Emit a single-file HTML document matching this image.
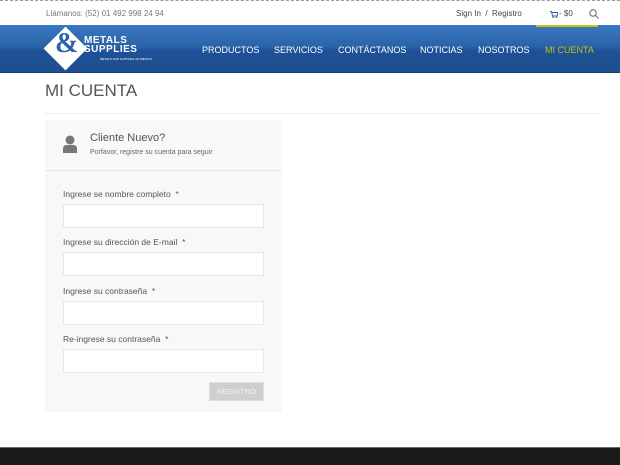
<!DOCTYPE html>
<html><head><meta charset="utf-8"><style>
*{margin:0;padding:0;box-sizing:border-box}
body{width:620px;height:465px;overflow:hidden;background:#fff;font-family:"Liberation Sans",sans-serif;position:relative}
.top{position:absolute;top:0;left:0;width:620px;height:25px;border-top:1px dashed #999;font-size:8px;color:#777}
.nav{position:absolute;top:25px;left:0;width:620px;height:48px;background:linear-gradient(#3a78c2 0%,#2a63a8 45%,#1d5096 55%,#1e4f8f 100%);border-bottom:1px solid #18406f}
.nav a{position:absolute;top:20px;color:#fff;font-size:9px;text-decoration:none}
.field label{display:block;font-size:8.5px;color:#555;margin-bottom:5px}
.field label b{color:#2a63a8;font-weight:normal}
.field div{width:201px;height:24px;background:#fff;border:1px solid #e8e8e8}
.field{position:absolute;left:63px}
</style></head><body>
<div class="top">
<span style="position:absolute;left:46px;top:8px">Llámanos: (52) 01 492 998 24 94</span>
<span style="position:absolute;left:456px;top:8px;color:#444">Sign In &nbsp;/&nbsp; Registro</span>
<svg style="position:absolute;left:550px;top:10px" width="8" height="7"><path d="M0 0.5H1.5L2.5 5H7L8 1.5H2" fill="none" stroke="#2a63a8" stroke-width="1"/><circle cx="3" cy="6.3" r="0.8" fill="#2a63a8"/><circle cx="6.5" cy="6.3" r="0.8" fill="#2a63a8"/></svg>
<span style="position:absolute;left:559px;top:8px;color:#444">- $0</span>
<svg style="position:absolute;left:589px;top:8px" width="10" height="10"><circle cx="4" cy="4" r="3.2" fill="none" stroke="#666" stroke-width="1"/><line x1="6.5" y1="6.5" x2="9.5" y2="9.5" stroke="#666"/></svg>
</div>
<div style="position:absolute;left:536px;top:25px;width:62px;height:2px;background:#c7c10a;z-index:2"></div>
<div class="nav">
<div style="position:absolute;width:31px;height:31px;background:#fff;transform:rotate(45deg);top:8px;left:50px"></div>
<span style="position:absolute;left:55px;top:3px;font-size:28px;color:#2a63a8;font-weight:bold;font-family:'Liberation Serif',serif">&amp;</span>
<span style="position:absolute;left:84px;top:11px;font-size:10px;color:#fff;font-weight:bold;line-height:9px;letter-spacing:0.5px">METALS<br>SUPPLIES</span>
<span style="position:absolute;left:100px;top:32px;font-size:3px;color:#fff">METALS AND SUPPLIES OF MEXICO</span>
<a style="left:202px">PRODUCTOS</a>
<a style="left:274px">SERVICIOS</a>
<a style="left:338px">CONTÁCTANOS</a>
<a style="left:420px">NOTICIAS</a>
<a style="left:478px">NOSOTROS</a>
<a style="left:545px;color:#c7c10a">MI CUENTA</a>
</div>
<div style="position:absolute;left:45px;top:81px;font-size:17px;color:#555">MI CUENTA</div>
<div style="position:absolute;left:45px;top:113px;width:555px;height:1px;background:#eee"></div>
<div style="position:absolute;left:45px;top:120px;width:237px;height:292px;background:#f8f8f8">
<div style="position:absolute;left:0;top:50px;width:237px;height:1px;background:#e4e4e4"></div>
<svg style="position:absolute;left:17px;top:15px" width="16" height="18"><circle cx="8" cy="5" r="4.5" fill="#777"/><path d="M1 18 V14 Q1 10 5 10 H11 Q15 10 15 14 V18 Z" fill="#777"/></svg>
<div style="position:absolute;left:45px;top:12px;font-size:11px;color:#555">Cliente Nuevo?</div>
<div style="position:absolute;left:45px;top:29px;font-size:7px;color:#666">Porfavor, registre su cuenta para seguir</div>
</div>
<div class="field" style="top:189px"><label>Ingrese se nombre completo &nbsp;<b>*</b></label><div></div></div>
<div class="field" style="top:237px"><label>Ingrese su dirección de E-mail &nbsp;<b>*</b></label><div></div></div>
<div class="field" style="top:286px"><label>Ingrese su contraseña &nbsp;<b>*</b></label><div></div></div>
<div class="field" style="top:334px"><label>Re-ingrese su contraseña &nbsp;<b>*</b></label><div></div></div>
<div style="position:absolute;left:209px;top:382px;width:55px;height:19px;background:#cfcfcf;border:1px solid #ddd;color:#f4f4f4;font-size:7.5px;text-align:center;line-height:17px">REGISTRO</div>
<div style="position:absolute;left:0;top:447px;width:620px;height:18px;background:#1b1b1b;border-top:1px solid #666"></div>
</body></html>
